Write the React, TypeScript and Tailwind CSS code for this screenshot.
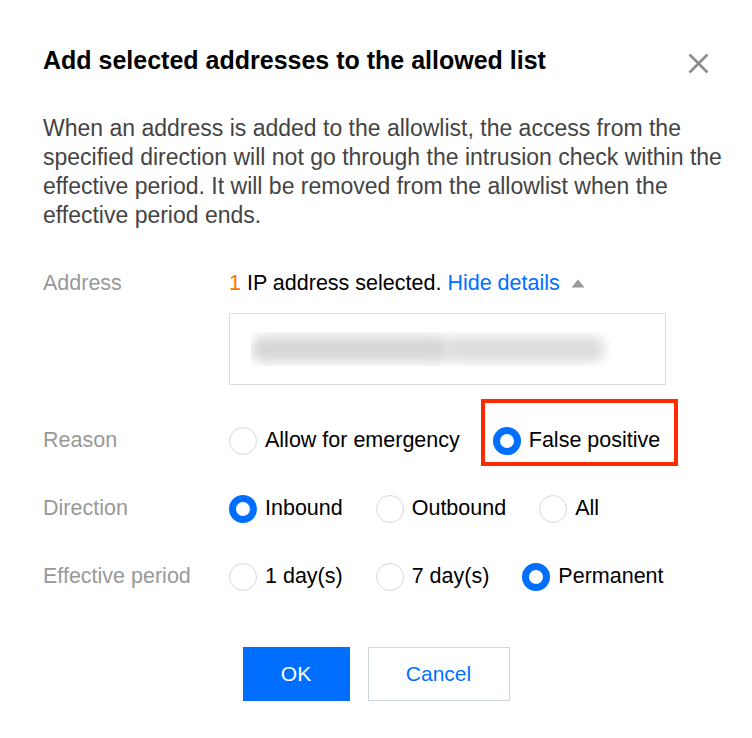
import React from 'react'

type Opt = { label: string; checked?: boolean; marked?: boolean }

function Radio({ checked }: { checked?: boolean }) {
  return checked ? (
    <span className="box-border inline-block h-[28px] w-[28px] shrink-0 rounded-full border-[7px] border-[#006eff] bg-white" />
  ) : (
    <span className="box-border inline-block h-[28px] w-[28px] shrink-0 rounded-full border border-[#d3d8e0] bg-white" />
  )
}

function RadioGroup({ options }: { options: Opt[] }) {
  return (
    <div className="flex items-center gap-[33px]">
      {options.map((o) => (
        <label key={o.label} className="relative flex items-center gap-[8px] text-[21.5px] leading-[29px] text-black">
          <Radio checked={o.checked} />
          <span>{o.label}</span>
          {/* red highlight frame from the screenshot */}
          {o.marked && (
            <span className="pointer-events-none absolute bottom-[-11px] left-[-12px] right-[-18px] top-[-27px] border-[4px] border-[#ff2a00]" />
          )}
        </label>
      ))}
    </div>
  )
}

function Row({ label, children }: { label: string; children: React.ReactNode }) {
  return (
    <div className="flex h-[29px] items-center">
      <div className="w-[186px] shrink-0 text-[21.5px] leading-[29px] text-[#999]">{label}</div>
      {children}
    </div>
  )
}

export default function App() {
  return (
    <div
      className="min-h-[738px] w-[752px] bg-white px-[43px] pt-[46px]"
      style={{ fontFamily: '"Liberation Sans", Arial, sans-serif' }}
    >
      {/* Header */}
      <div className="flex items-start justify-between">
        <h1 className="whitespace-nowrap text-[25px] font-bold leading-[29px] text-black">
          Add selected addresses to the allowed list
        </h1>
        <svg width="21" height="21" viewBox="0 0 21 21" className="mt-[7px]">
          <path d="M1.5 1.5 L19.5 19.5 M19.5 1.5 L1.5 19.5" stroke="#8c8c8c" strokeWidth="2.6" />
        </svg>
      </div>

      <p className="mt-[39px] w-[680px] text-[23px] leading-[29px] text-[#444]">
        When an address is added to the allowlist, the access from the specified direction will not go through the
        intrusion check within the effective period. It will be removed from the allowlist when the effective period
        ends.
      </p>

      {/* Address */}
      <div className="mt-[39px]">
        <Row label="Address">
          <div className="flex items-center text-[21.5px] leading-[29px] text-black">
            <span className="text-[#ff7200]">1</span>
            <span className="ml-[6px]">IP address selected.</span>
            <span className="ml-[6px] text-[#006eff]">Hide details</span>
            <svg width="14" height="9" viewBox="0 0 14 9" className="ml-[11px]">
              <path d="M7 0.5 L13.5 8.5 L0.5 8.5 Z" fill="#999" />
            </svg>
          </div>
        </Row>

        <div className="ml-[186px] mt-[15px] h-[72px] w-[437px] border border-[#dcdcdc] bg-white py-[18px] pl-[21px]">
          <div className="flex h-full items-center overflow-hidden">
            <div className="h-[26px] w-[200px] rounded-full bg-[#d6d6d6] blur-[6px]" />
            <div className="ml-[-6px] h-[26px] w-[160px] rounded-full bg-[#dcdcdc] blur-[6px]" />
          </div>
        </div>
      </div>

      {/* Options */}
      <div className="mt-[41px] flex flex-col gap-[39px]">
        <Row label="Reason">
          <RadioGroup options={[{ label: 'Allow for emergency' }, { label: 'False positive', checked: true, marked: true }]} />
        </Row>
        <Row label="Direction">
          <RadioGroup options={[{ label: 'Inbound', checked: true }, { label: 'Outbound' }, { label: 'All' }]} />
        </Row>
        <Row label="Effective period">
          <RadioGroup options={[{ label: '1 day(s)' }, { label: '7 day(s)' }, { label: 'Permanent', checked: true }]} />
        </Row>
      </div>

      {/* Footer */}
      <div className="mt-[56px] flex justify-center gap-[18px]">
        <button className="h-[54px] w-[107px] bg-[#006eff] text-[21px] text-white">OK</button>
        <button className="h-[54px] w-[142px] border border-[#cfd5de] bg-white text-[21px] text-[#006eff]">
          Cancel
        </button>
      </div>
    </div>
  )
}
